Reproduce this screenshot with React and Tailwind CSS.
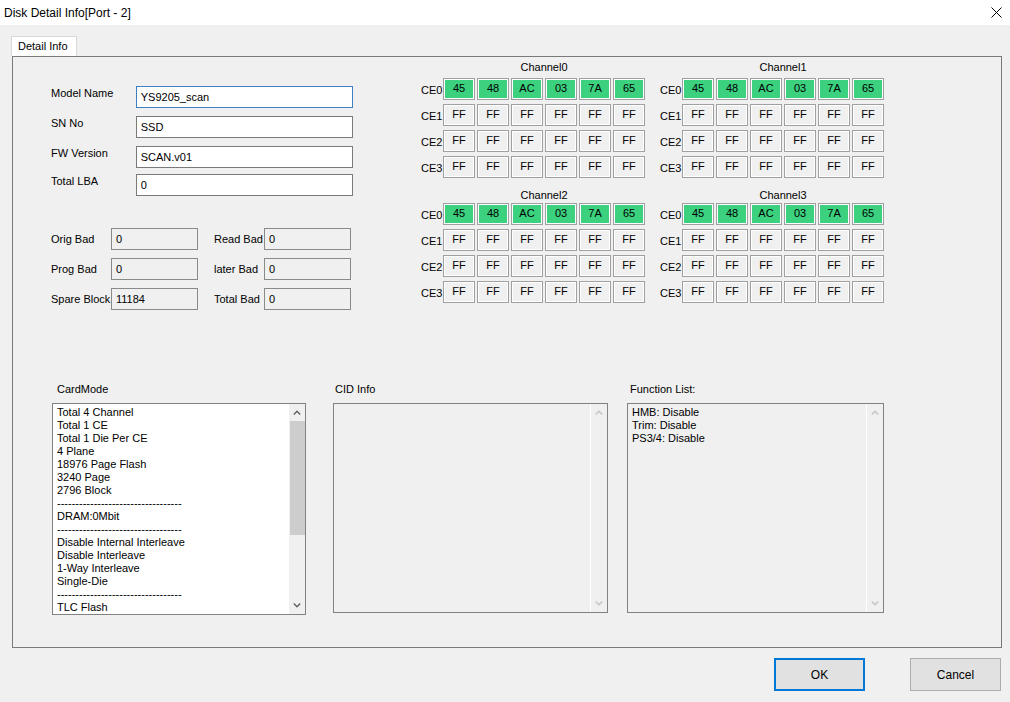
import React from 'react';

const ROW_DATA = ['45', '48', 'AC', '03', '7A', '65'];

function Cell({ value, on }) {
  return (
    <div
      className={`w-[32px] h-[22px] border border-[#a0a0a0] shadow-[inset_0_0_0_1px_#ffffff] flex items-center justify-center leading-none pb-[2px] ${
        on ? 'bg-[#3bd17f]' : 'bg-[#f0f0f0]'
      }`}
    >
      {value}
    </div>
  );
}

function Channel({ name, first }) {
  return (
    <div className="w-[224px]">
      <div className={`pl-[22px] text-center leading-[14px] h-[14px] ${first ? 'mb-[4px]' : 'mt-[10px] mb-[1px]'}`}>{name}</div>
      <div className="flex flex-col gap-[4px]">
        {[0, 1, 2, 3].map((ce) => (
          <div key={ce} className="flex items-center">
            <div className="w-[22px] pt-[3px]">CE{ce}</div>
            <div className="flex gap-[2px]">
              {ROW_DATA.map((v, i) => (
                <Cell key={i} value={ce === 0 ? v : 'FF'} on={ce === 0} />
              ))}
            </div>
          </div>
        ))}
      </div>
    </div>
  );
}

function Arrow({ up, dim }) {
  return (
    <svg width="8" height="5" viewBox="0 0 8 5" className={up ? '' : 'rotate-180'}>
      <polyline points="0.8,4.5 4,1.3 7.2,4.5" fill="none" stroke={dim ? '#c4c4c4' : '#606060'} strokeWidth="1.4" />
    </svg>
  );
}

function ListBox({ lines, active, height }) {
  return (
    <div className={`flex border border-[#828282] ${height} ${active ? 'bg-white' : 'bg-[#f0f0f0]'}`}>
      <div className="flex-1 pl-[4px] pt-[2px] leading-[13px] overflow-hidden whitespace-pre">
        {lines.map((l, i) => (
          <div key={i}>{l}</div>
        ))}
      </div>
      <div className="w-[17px] bg-[#f0f0f0] border-l border-white flex flex-col items-center">
        <div className="h-[17px] flex items-center justify-center">
          <Arrow up dim={!active} />
        </div>
        <div className="flex-1 w-full">
          {active && <div className="mx-auto w-[15px] h-[114px] bg-[#cdcdcd]" />}
        </div>
        <div className="h-[17px] flex items-center justify-center">
          <Arrow dim={!active} />
        </div>
      </div>
    </div>
  );
}

function TextField({ label, value, focused }) {
  return (
    <div className="flex items-start">
      <div className="w-[85px] leading-[14px]">{label}</div>
      <div
        className={`w-[218px] h-[22px] bg-white border flex items-center pl-[4px] ${
          focused ? 'border-[#3f80c4]' : 'border-[#7a7a7a]'
        }`}
      >
        {value}
      </div>
    </div>
  );
}

function ReadField({ value }) {
  return (
    <div className="w-[87px] h-[22px] bg-[#f0f0f0] border border-[#8a8a8a] flex items-center pl-[4px]">{value}</div>
  );
}

const DASH = '----------------------------------';

const cardMode = [
  'Total 4 Channel',
  'Total 1 CE',
  'Total 1 Die Per CE',
  '4 Plane',
  '18976 Page Flash',
  '3240 Page',
  '2796 Block',
  DASH,
  'DRAM:0Mbit',
  DASH,
  'Disable Internal Interleave',
  'Disable Interleave',
  '1-Way Interleave',
  'Single-Die',
  DASH,
  'TLC Flash',
];

export default function App() {
  return (
    <div className="w-[1010px] h-[702px] bg-[#f0f0f0] flex flex-col overflow-hidden text-[11px] text-black font-['Liberation_Sans',Arial,sans-serif]">
      {/* title bar */}
      <div className="h-[25px] shrink-0 bg-white flex items-center justify-between pl-[4px] pr-[8px] text-[12px]">
        <span>Disk Detail Info[Port - 2]</span>
        <svg width="11" height="11" viewBox="0 0 11 11">
          <path d="M0.5 0.5 L10.5 10.5 M10.5 0.5 L0.5 10.5" stroke="#000" strokeWidth="1" />
        </svg>
      </div>

      {/* tab */}
      <div className="pt-[11px] pl-[11px]">
        <div className="w-[66px] h-[20px] bg-white border border-b-0 border-[#d9d9d9] pl-[6px] leading-[19px]">Detail Info</div>
      </div>

      {/* tab page */}
      <div className="ml-[12px] w-[990px] h-[592px] shrink-0 border border-[#7a7a7a]">
        <div className="flex items-start">
          <div className="ml-[38px] mt-[29px] w-[302px]">
            <TextField label="Model Name" value="YS9205_scan" focused />
            <div className="mt-[8px]">
              <TextField label="SN No" value="SSD" />
            </div>
            <div className="mt-[8px]">
              <TextField label="FW Version" value="SCAN.v01" />
            </div>
            <div className="mt-[6px]">
              <TextField label="Total LBA" value="0" />
            </div>

            <div className="mt-[32px] flex flex-col gap-[8px]">
              {[
                ['Orig Bad', '0', 'Read Bad', '0'],
                ['Prog Bad', '0', 'later Bad', '0'],
                ['Spare Block', '11184', 'Total Bad', '0'],
              ].map((r) => (
                <div key={r[0]} className="flex items-center">
                  <div className="w-[60px]">{r[0]}</div>
                  <ReadField value={r[1]} />
                  <div className="ml-[16px] w-[50px]">{r[2]}</div>
                  <ReadField value={r[3]} />
                </div>
              ))}
            </div>
          </div>

          <div className="ml-[68px] mt-[3px]">
            <div className="flex gap-[15px]">
              <Channel name="Channel0" first />
              <Channel name="Channel1" first />
            </div>
            <div className="flex gap-[15px]">
              <Channel name="Channel2" />
              <Channel name="Channel3" />
            </div>
          </div>
        </div>

        <div className="mt-[72px] ml-[39px] flex items-start">
          <div className="w-[254px]">
            <div className="pl-[5px] leading-[14px] mb-[7px]">CardMode</div>
            <ListBox lines={cardMode} active height="h-[212px]" />
          </div>
          <div className="ml-[27px] w-[275px]">
            <div className="pl-[2px] leading-[14px] mb-[7px]">CID Info</div>
            <ListBox lines={[]} height="h-[210px]" />
          </div>
          <div className="ml-[19px] w-[257px]">
            <div className="pl-[3px] leading-[14px] mb-[7px]">Function List:</div>
            <ListBox lines={['HMB: Disable', 'Trim: Disable', 'PS3/4: Disable']} height="h-[210px]" />
          </div>
        </div>
      </div>

      {/* buttons */}
      <div className="mt-[10px] flex justify-end gap-[45px] pr-[9px]">
        <button className="w-[91px] h-[33px] bg-[#e1e1e1] border-2 border-[#0078d7] text-[12px]">OK</button>
        <button className="w-[91px] h-[33px] bg-[#e1e1e1] border border-[#adadad] text-[12px]">Cancel</button>
      </div>
    </div>
  );
}
